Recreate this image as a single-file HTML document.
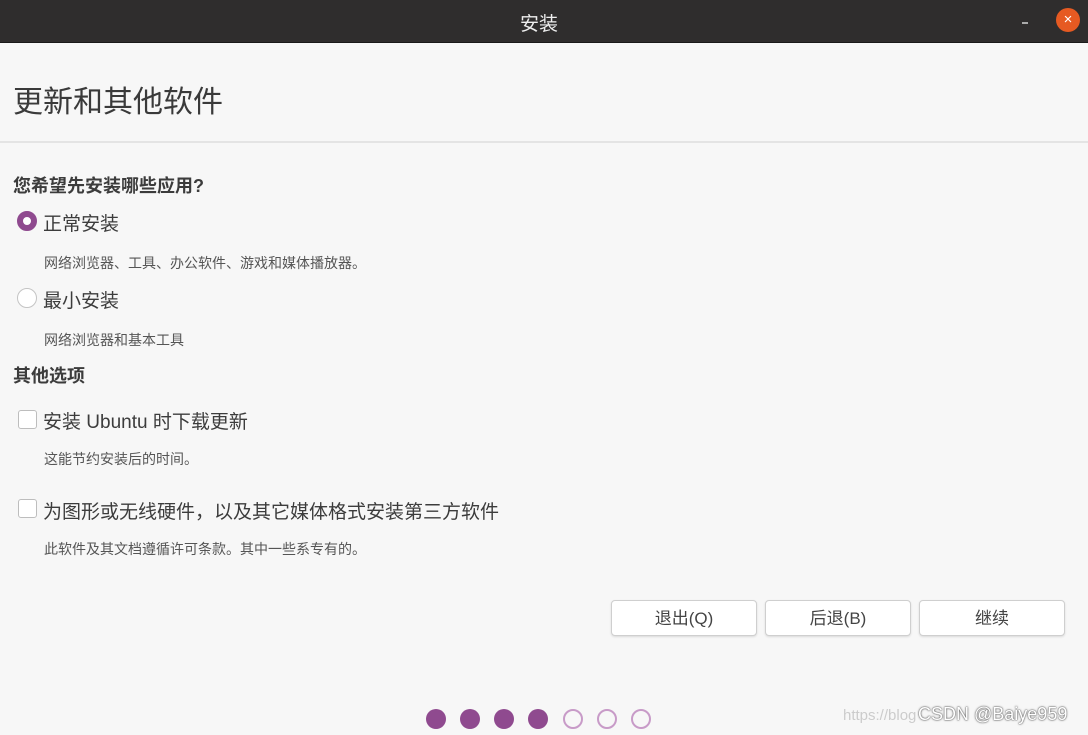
<!DOCTYPE html>
<html><head><meta charset="utf-8"><style>
*{margin:0;padding:0;box-sizing:border-box}
body{width:1088px;height:735px;overflow:hidden;background:#f7f7f7;font-family:"Liberation Sans","Noto Sans CJK SC",sans-serif;color:#3c3c3c;position:relative}
.t{position:absolute;white-space:nowrap}
.bar{position:absolute;left:0;top:0;width:1088px;height:43px;background:#2f2d2d;border-bottom:1px solid #1a1a1a}
.rad{position:absolute;width:20px;height:20px;border-radius:50%;border:1px solid #c4c4c4;background:#fff}
.chk{position:absolute;width:19px;height:19px;border-radius:3px;border:1px solid #bdbdbd;background:#fff}
.btn{position:absolute;top:600px;width:146px;height:36px;border:1px solid #cfcfcf;border-radius:4px;background:#fff;box-shadow:0 1px 2px rgba(0,0,0,.12);font-size:17px;text-align:center;line-height:36px;color:#444}
.dot{position:absolute;top:709px;width:20px;height:20px;border-radius:50%}
.f{background:#8f4a8f}.o{border:2px solid #c89bc8;background:#f7f7f7}
</style></head><body>
<div class="bar"></div>
<div class="t" style="left:520px;top:9px;font-size:19px;color:#eee">安装</div>
<div style="position:absolute;left:1022px;top:22px;width:6px;height:2px;background:#aaa"></div>
<div style="position:absolute;left:1056px;top:8px;width:24px;height:24px;border-radius:50%;background:#e65a22;color:#fff;font-size:15px;text-align:center;line-height:23px">×</div>
<div class="t" style="left:13px;top:77px;font-size:30px;color:#3a3a3a">更新和其他软件</div>
<div style="position:absolute;left:0;top:141px;width:1088px;height:2px;background:#e4e4e4"></div>
<div class="t" style="left:13px;top:172px;font-size:18px;font-weight:bold">您希望先安装哪些应用?</div>
<div class="rad" style="left:17px;top:211px;border:6px solid #8f4a8f"></div>
<div class="t" style="left:43px;top:209px;font-size:19px">正常安装</div>
<div class="t" style="left:44px;top:253px;font-size:14px;color:#555">网络浏览器、工具、办公软件、游戏和媒体播放器。</div>
<div class="rad" style="left:17px;top:288px"></div>
<div class="t" style="left:43px;top:286px;font-size:19px">最小安装</div>
<div class="t" style="left:44px;top:330px;font-size:14px;color:#555">网络浏览器和基本工具</div>
<div class="t" style="left:13px;top:362px;font-size:18px;font-weight:bold">其他选项</div>
<div class="chk" style="left:18px;top:410px"></div>
<div class="t" style="left:43px;top:407px;font-size:19px">安装 Ubuntu 时下载更新</div>
<div class="t" style="left:44px;top:449px;font-size:14px;color:#555">这能节约安装后的时间。</div>
<div class="chk" style="left:18px;top:499px"></div>
<div class="t" style="left:43px;top:497px;font-size:19px">为图形或无线硬件，以及其它媒体格式安装第三方软件</div>
<div class="t" style="left:44px;top:539px;font-size:14px;color:#555">此软件及其文档遵循许可条款。其中一些系专有的。</div>
<div class="btn" style="left:611px">退出(Q)</div>
<div class="btn" style="left:765px">后退(B)</div>
<div class="btn" style="left:919px">继续</div>
<div class="dot f" style="left:426px"></div>
<div class="dot f" style="left:460px"></div>
<div class="dot f" style="left:494px"></div>
<div class="dot f" style="left:528px"></div>
<div class="dot o" style="left:563px"></div>
<div class="dot o" style="left:597px"></div>
<div class="dot o" style="left:631px"></div>
<div class="t" style="left:843px;top:707px;font-size:15px;color:#ccc">https://blog</div>
<div class="t" style="left:918px;top:704px;font-size:18px;color:#fff;text-shadow:0 0 2px #555,0 0 1px #333">CSDN @Baiye959</div>
</body></html>
